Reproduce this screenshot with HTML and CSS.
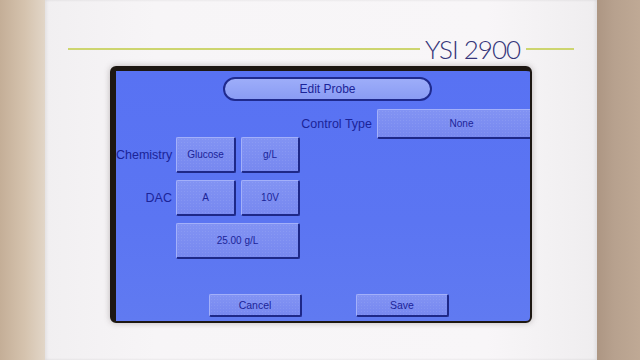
FILE: index.html
```html
<!DOCTYPE html>
<html>
<head>
<meta charset="utf-8">
<link rel="stylesheet" href="styles.css">
</head>
<body>
<div class="scene">
  <div class="wall-left"></div>
  <div class="device">
    <div class="brand-row">
      <span class="rule rule-long"></span>
      <span class="brand">YSI 2900</span>
      <span class="rule rule-short"></span>
    </div>
    <div class="bezel">
      <div class="screen">
        <div class="title-row">
          <div class="pill">Edit Probe</div>
        </div>
        <div class="control-row">
          <span class="label label-ct">Control Type</span>
          <div class="btn btn-wide">None</div>
        </div>
        <div class="form-row row-chem">
          <span class="label label-side">Chemistry</span>
          <div class="btn btn-a">Glucose</div>
          <div class="btn btn-b">g/L</div>
        </div>
        <div class="form-row">
          <span class="label label-side">DAC</span>
          <div class="btn btn-a">A</div>
          <div class="btn btn-b">10V</div>
        </div>
        <div class="form-row">
          <span class="label label-side"></span>
          <div class="btn btn-long">25.00 g/L</div>
        </div>
        <div class="action-row">
          <div class="btn btn-action">Cancel</div>
          <div class="btn btn-action">Save</div>
        </div>
      </div>
    </div>
  </div>
  <div class="wall-right"></div>
</div>
</body>
</html>
```
FILE: styles.css
```css
html, body {
  margin: 0;
  padding: 0;
  width: 640px;
  height: 360px;
  overflow: hidden;
}
body {
  font-family: "Liberation Sans", Arial, sans-serif;
}
.scene {
  display: flex;
  width: 640px;
  height: 360px;
}
.wall-left {
  width: 45px;
  flex: none;
  background: linear-gradient(90deg, #c4ae97 0%, #d5c3ae 55%, #e2d6c8 100%);
}
.wall-right {
  width: 43px;
  flex: none;
  background: linear-gradient(90deg, #ad9683 0%, #b7a18e 40%, #bfa995 100%);
}
.device {
  width: 552px;
  flex: none;
  background: linear-gradient(90deg, #f1eff1 0%, #f7f5f7 20%, #f8f6f8 80%, #efedef 100%);
  box-shadow: inset 2px 0 3px rgba(0,0,0,0.05), inset -2px 0 3px rgba(0,0,0,0.06);
  display: flex;
  flex-direction: column;
}
.brand-row {
  display: flex;
  align-items: center;
  height: 30px;
  margin-top: 34px;
  padding-left: 23px;
}
.rule {
  height: 2px;
  background: #cdd56f;
}
.rule-long { width: 352px; }
.rule-short { width: 48px; }
.brand {
  font-family: "Lato", "Liberation Sans", sans-serif;
  font-weight: 300;
  font-size: 26px;
  color: #35357a;
  letter-spacing: -1px;
  padding: 0 6px 0 5px;
  line-height: 30px;
}
.bezel {
  margin-top: 2px;
  margin-left: 65px;
  width: 414px;
  height: 250px;
  border-style: solid;
  border-color: #1d1712;
  border-width: 5px 2px 2px 6px;
  border-radius: 6px;
  box-shadow: 0 0 6px rgba(80,70,70,0.35);
  overflow: hidden;
  background: linear-gradient(180deg, #5872f3 0%, #5b75f2 60%, #607af1 100%);
}
.screen {
  display: flex;
  flex-direction: column;
  color: #1b2498;
}
.title-row {
  display: flex;
  margin-top: 6px;
  padding-left: 107px;
}
.pill {
  width: 205px;
  height: 20px;
  border: 2px solid #1f2a8e;
  border-radius: 12px;
  background: linear-gradient(180deg, #9dadf9 0%, #8a9cf4 100%);
  font-size: 12px;
  line-height: 20px;
  text-align: center;
  color: #1b2498;
}
.control-row {
  display: flex;
  align-items: center;
  margin-top: 8px;
  height: 30px;
}
.label {
  font-size: 12.5px;
  text-align: right;
  flex: none;
}
.label-ct {
  width: 256px;
  margin-right: 5px;
}
.btn {
  flex: none;
  box-sizing: border-box;
  display: flex;
  align-items: center;
  justify-content: center;
  font-size: 10px;
  color: #1b2498;
  background: #7b8cf1;
  background-image:
    radial-gradient(rgba(255,255,255,0.08) 1px, transparent 1px),
    linear-gradient(180deg, #8293f3 0%, #7788f0 100%);
  background-size: 3px 3px, 100% 100%;
  border-top: 1px solid #a3b0fa;
  border-left: 1px solid #a3b0fa;
  border-right: 2px solid #1e2888;
  border-bottom: 2px solid #1e2888;
  border-radius: 2px;
}
.btn-wide {
  width: 170px;
  height: 30px;
}
.form-row {
  display: flex;
  align-items: center;
  height: 36px;
  margin-top: 7px;
}
.row-chem {
  margin-top: -2px;
}
.label-side {
  width: 56px;
  margin-right: 4px;
}
.btn-a {
  width: 60px;
  height: 36px;
  margin-right: 5px;
}
.btn-b {
  width: 59px;
  height: 36px;
}
.btn-long {
  width: 124px;
  height: 36px;
}
.action-row {
  display: flex;
  margin-top: 35px;
  padding-left: 93px;
  gap: 54px;
}
.btn-action {
  width: 93px;
  height: 23px;
  font-size: 10.5px;
}
```
